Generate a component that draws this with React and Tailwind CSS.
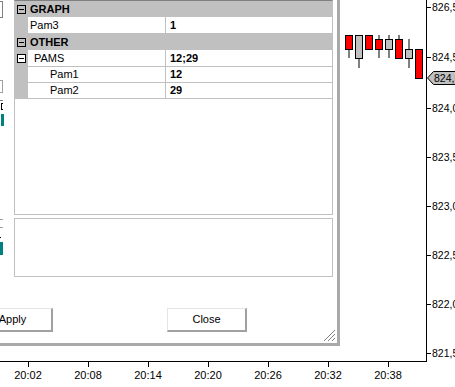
import React from 'react';

const candles = [
    { x: 345, top: 35, bottom: 49, high: 35, low: 58, up: false },
    { x: 355, top: 35, bottom: 58, high: 35, low: 68, up: true },
    { x: 365, top: 35, bottom: 49, high: 35, low: 49, up: false },
    { x: 375, top: 39, bottom: 49, high: 35, low: 58, up: false },
    { x: 385, top: 39, bottom: 49, high: 35, low: 58, up: true },
    { x: 395, top: 39, bottom: 58, high: 35, low: 58, up: false },
    { x: 405, top: 49, bottom: 58, high: 39, low: 68, up: true },
    { x: 415, top: 49, bottom: 78, high: 49, low: 78, up: false },
];

const prices = [
    { y: 7, label: '826,5' },
    { y: 57, label: '824,5' },
    { y: 108, label: '824,0' },
    { y: 157, label: '823,5' },
    { y: 206, label: '823,0' },
    { y: 255, label: '822,5' },
    { y: 304, label: '822,0' },
    { y: 353, label: '821,5' },
];

const times = ['20:02', '20:08', '20:14', '20:20', '20:26', '20:32', '20:38'];

const Chart = () => (
    <svg width="455" height="387" className="absolute inset-0" style={{ fontFamily: '"Liberation Sans", Arial, sans-serif' }}>
        {candles.map((c, i) => (
            <g key={i}>
                <line x1={c.x + 4} x2={c.x + 4} y1={c.high} y2={c.low} stroke="#000" />
                <rect x={c.x + 0.5} y={c.top + 0.5} width="7" height={c.bottom - c.top} fill={c.up ? '#c0c0c0' : '#ff0000'} stroke="#000" />
            </g>
        ))}

        {/* price axis */}
        <line x1="426.5" x2="426.5" y1="0" y2="362" stroke="#000" />
        {prices.map(p => (
            <g key={p.y}>
                <line x1="426" x2="431" y1={p.y + 0.5} y2={p.y + 0.5} stroke="#000" />
                <text x="432" y={p.y + 4} fontSize="10.5" fill="#000">{p.label}</text>
            </g>
        ))}
        <polygon points="427.5,78 433.5,71.5 460,71.5 460,84.5 433.5,84.5" fill="#c0c0c0" stroke="#000" />
        <text x="434" y="82" fontSize="10.5" fill="#000">824,5</text>

        {/* time axis */}
        <line x1="0" x2="427" y1="361.5" y2="361.5" stroke="#000" />
        {times.map((t, i) => (
            <g key={t}>
                <line x1={28.5 + i * 60} x2={28.5 + i * 60} y1="361" y2="367" stroke="#000" />
                <text x={28 + i * 60} y="379" fontSize="11" textAnchor="middle" fill="#000">{t}</text>
            </g>
        ))}
    </svg>
);

const ExpandBox = ({ white }) => (
    <div className={`w-[9px] h-[9px] border border-black flex items-center justify-center ${white ? 'bg-white' : ''}`}>
        <div className="w-[5px] h-px bg-black" />
    </div>
);

const Section = ({ title }) => (
    <div className="h-[16px] bg-[#c0c0c0] flex items-center pl-[2px] gap-[4px]">
        <ExpandBox />
        <span className="font-bold">{title}</span>
    </div>
);

const Row = ({ name, value, indent = 2, h = 'h-[16px]', box = false }) => (
    <div className={`flex ${h}`}>
        <div className="w-[13px] bg-[#c0c0c0] flex items-center pl-[2px]">
            {box && <ExpandBox white />}
        </div>
        <div className="flex-1 flex border-b border-[#c0c0c0]">
            <div className="w-[138px] border-r border-[#c0c0c0] flex items-center" style={{ paddingLeft: indent }}>
                {name}
            </div>
            <div className="flex-1 flex items-center pl-[4px] font-bold">{value}</div>
        </div>
    </div>
);

export default function App() {
    return (
        <div className="relative w-[455px] h-[387px] bg-white overflow-hidden text-[11px] text-black" style={{ fontFamily: '"Liberation Sans", Arial, sans-serif' }}>
            <Chart />

            {/* properties dialog */}
            <div className="absolute left-0 top-0 w-[340px] h-[346px] bg-white border-r-[3px] border-b-[3px] border-[#a9a9a9] flex flex-col">
                <div className="flex">
                    {/* bits of controls cut off at the left */}
                    <div className="w-[14px] flex flex-col">
                        <div className="mt-[1px] w-[3px] h-[17px] border border-l-0 border-[#808080]" />
                        <div className="mt-[62px] w-[3px] h-[13px] border border-l-0 border-[#a0a0a0]" />
                        <div className="mt-[7px] w-[3px] h-px bg-[#808080]" />
                        <div className="mt-[2px] ml-[1px] w-[2px] h-[7px] border-l border-t border-b border-black" />
                        <div className="mt-[4px] ml-[1px] w-[3px] h-[12px] bg-[#008080]" />
                        <div className="mt-[93px] w-[3px] h-px bg-[#a0a0a0]" />
                        <div className="mt-[7px] w-[3px] h-px bg-[#a0a0a0]" />
                        <div className="mt-[9px] w-px h-px bg-black" />
                        <div className="mt-[4px] w-[3px] h-[13px] bg-[#008080]" />
                    </div>

                    <div className="flex flex-col">
                        <div className="w-[319px] h-[215px] border border-[#c0c0c0] border-t-[#808080]">
                            <Section title="GRAPH" />
                            <Row name="Pam3" value="1" h="h-[17px]" />
                            <Section title="OTHER" />
                            <Row name={<span className="pl-[4px]">PAMS</span>} value="12;29" h="h-[17px]" box />
                            <Row name="Pam1" value="12" indent={22} />
                            <Row name="Pam2" value="29" indent={22} />
                        </div>
                        <div className="mt-[3px] w-[319px] h-[59px] border border-[#c0c0c0]" />
                    </div>
                </div>

                <div className="flex mt-[31px]">
                    <button className="ml-[-27px] w-[80px] h-[24px] bg-white border-t border-l border-[#e4e4e4] border-r-2 border-b-2 border-r-[#a0a0a0] border-b-[#a0a0a0] text-[11px]">
                        Apply
                    </button>
                    <button className="ml-[114px] w-[80px] h-[24px] bg-white border-t border-l border-[#e4e4e4] border-r-2 border-b-2 border-r-[#a0a0a0] border-b-[#a0a0a0] text-[11px]">
                        Close
                    </button>
                </div>

                {/* resize grip */}
                <svg width="13" height="13" className="absolute right-[1px] bottom-[1px]">
                    <line x1="12" y1="1" x2="1" y2="12" stroke="#808080" />
                    <line x1="12" y1="5" x2="5" y2="12" stroke="#808080" />
                    <line x1="12" y1="9" x2="9" y2="12" stroke="#808080" />
                </svg>
            </div>
        </div>
    );
}
